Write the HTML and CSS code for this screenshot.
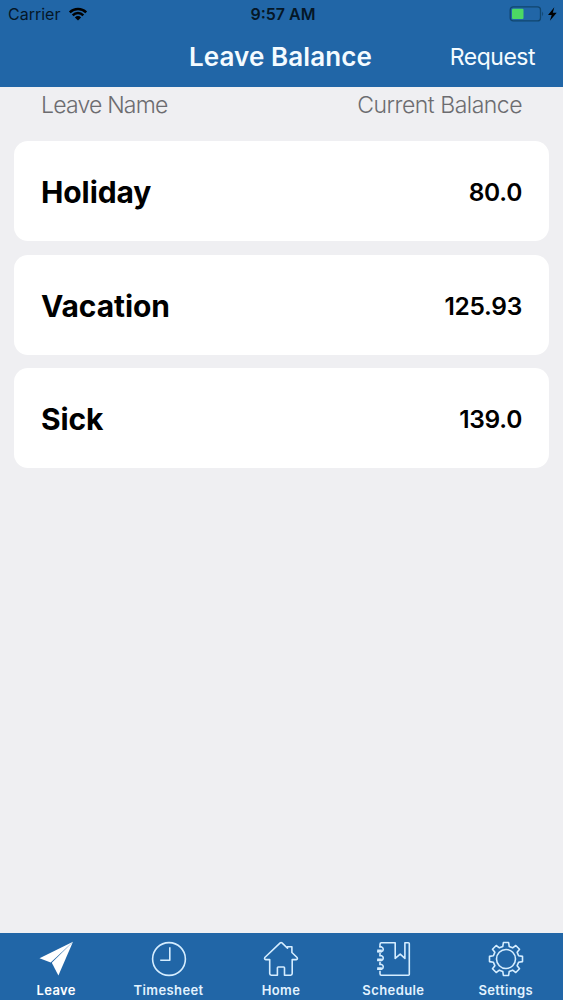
FILE: index.html
```html
<!DOCTYPE html>
<html lang="en">
<head>
  <meta charset="UTF-8" />
  <meta name="viewport" content="width=device-width, initial-scale=1.0" />
  <title>Leave Balance</title>
  <link rel="stylesheet" href="styles.css">
</head>
<body>
  <div class="app">
    <header class="header">
      <div class="status-bar">
        <div class="carrier">
          <span>Carrier</span>
          <svg viewBox="0 0 20 14" width="20" height="14">
            <path d="M1.8 5.3a11.6 11.6 0 0 1 16.4 0M4.7 8.3a7.5 7.5 0 0 1 10.6 0" fill="none" stroke="currentColor" stroke-width="2.5"/>
            <path d="M6.9 10.4a4.4 4.4 0 0 1 6.2 0L10 13.5z" fill="currentColor"/>
          </svg>
        </div>
        <span class="time">9:57 AM</span>
        <div class="battery">
          <svg viewBox="0 0 49 16" width="49" height="16">
            <rect x="1.2" y=".9" width="30.3" height="14" rx="3" fill="none" stroke="#11466f" stroke-width="1.3"/>
            <rect x="3" y="2.8" width="11.5" height="10.3" rx="1" fill="#4cd964"/>
            <path d="M33.2 5.5q2 2.3 0 4.8z" fill="#11466f"/>
            <path d="M45.3 1.2l-6.3 7.8h3.7l-1.8 5.7 6.8-8h-3.9z" fill="#000"/>
          </svg>
        </div>
      </div>
      <div class="nav-bar">
        <h1>Leave Balance</h1>
        <a class="request" href="#">Request</a>
      </div>
    </header>

    <main class="content">
      <div class="list-head">
        <span class="col-name">Leave Name</span>
        <span>Current Balance</span>
      </div>
      <div class="card">
        <span class="leave-name">Holiday</span>
        <span class="balance">80.0</span>
      </div>
      <div class="card">
        <span class="leave-name">Vacation</span>
        <span class="balance">125.93</span>
      </div>
      <div class="card">
        <span class="leave-name">Sick</span>
        <span class="balance">139.0</span>
      </div>
    </main>

    <nav class="tab-bar">
      <a class="tab active" href="#">
        <svg viewBox="0 0 36 36">
          <path d="M35 .8L1.5 17.2l11.2 4.2z" fill="currentColor"/>
          <path d="M35 .8L13.8 21.8l6.6 12.8z" fill="currentColor"/>
        </svg>
        <span>Leave</span>
      </a>
      <a class="tab" href="#">
        <svg class="line" viewBox="0 0 36 36">
          <circle cx="18" cy="18" r="16.4"/>
          <path d="M18.8 6.3v13H9.2"/>
        </svg>
        <span>Timesheet</span>
      </a>
      <a class="tab" href="#">
        <svg class="line" viewBox="0 0 36 36">
          <path d="M17.2 1.9L1.8 16.5q-.8 1.8 1 2.1h3.9v14q0 1.6 1.6 1.6h6.1v-7.4q0-.8.8-.8h5.5q.8 0 .8.8v7.4h6.1q1.6 0 1.6-1.6v-14h4q1.8-.4.9-2.1l-5.2-5V5.7h-4.4v1.6L19 1.9q-.9-.8-1.8 0z"/>
        </svg>
        <span>Home</span>
      </a>
      <a class="tab" href="#">
        <svg class="line" viewBox="0 0 36 36">
          <path d="M5 6V3.2Q5 1.8 6.4 1.8h13.8v15.6l5-4.2 4.7 4.2V1.8h3.4q1 0 1 1v30.4q0 1-1 1H6.4Q5 34.2 5 32.8v-3M5 12v2.4M5 20.7v2.5"/>
          <path d="M2.2 10.6h4.4a2.5 2.5 0 0 0 0-4.7H4.2M2.2 19.4h4.4a2.5 2.5 0 0 0 0-4.7H4.2M2.2 28.2h4.4a2.5 2.5 0 0 0 0-4.7H4.2"/>
          <path d="M2.2 9.9h4.6M2.2 18.7h4.6M2.2 27.5h4.6" stroke-width="2.6"/>
        </svg>
        <span>Schedule</span>
      </a>
      <a class="tab" href="#">
        <svg class="line" viewBox="-18 -18 36 36">
          <circle r="9.5"/>
          <path d="M-2.6-16.5h5.2l.6 3.9 3.45 1.43L9.8-13.5l3.7 3.7-2.33 3.15L12.6-3.2l3.9.6v5.2l-3.9.6-1.43 3.45L13.5 9.8 9.8 13.5l-3.15-2.33L3.2 12.6l-.6 3.9h-5.2l-.6-3.9-3.45-1.43L-9.8 13.5l-3.7-3.7 2.33-3.15L-12.6 3.2l-3.9-.6v-5.2l3.9-.6 1.43-3.45L-13.5-9.8l3.7-3.7 3.15 2.33L-3.2-12.6z"/>
        </svg>
        <span>Settings</span>
      </a>
    </nav>
  </div>
</body>
</html>
```

FILE: styles.css
```css
:root {
  --primary: #2166a7;
  --background: #efeff2;
  --card: #ffffff;
  --muted: #6c6c70;
}

* {
  box-sizing: border-box;
}

body {
  margin: 0;
  font-family: Inter, "Liberation Sans", sans-serif;
  background: var(--background);
  color: #000;
}

a {
  color: inherit;
  text-decoration: none;
}

svg {
  display: block;
}

.app {
  display: flex;
  flex-direction: column;
  height: 100vh;
}

.header {
  height: 87px;
  background: var(--primary);
}

.status-bar {
  display: grid;
  grid-template-columns: 1fr auto 1fr;
  align-items: center;
  height: 28px;
  padding: 0 5px 0 8px;
  font-size: 16px;
  color: #051727;
}

.carrier {
  display: flex;
  align-items: center;
  gap: 8px;
}

.carrier svg {
  color: #000;
}

.time {
  font-weight: 600;
}

.battery {
  justify-self: end;
}

.nav-bar {
  display: grid;
  grid-template-columns: 1fr auto 1fr;
  align-items: center;
  height: 56px;
  padding: 0 28px 0 26px;
  color: #f4fbff;
}

h1 {
  grid-column: 2;
  margin: 0;
  font-size: 26px;
  font-weight: 600;
  letter-spacing: 0.1px;
}

.request {
  justify-self: end;
  padding-top: 2px;
  font-size: 23px;
  letter-spacing: -0.5px;
}

.content {
  flex: 1;
  padding: 0 14px;
}

.list-head {
  display: flex;
  justify-content: space-between;
  height: 54px;
  padding: 4px 27px 0;
  font-size: 23px;
  font-weight: 300;
  line-height: 28px;
  letter-spacing: -0.5px;
  color: var(--muted);
}

.col-name {
  letter-spacing: -0.8px;
}

.card {
  display: flex;
  justify-content: space-between;
  align-items: center;
  height: 100px;
  margin-bottom: 13.6px;
  padding: 2px 27px 0;
  border-radius: 14px;
  background: var(--card);
}

.leave-name {
  font-size: 30px;
  font-weight: 700;
  letter-spacing: -0.1px;
}

.balance {
  font-size: 24.5px;
  font-weight: 600;
  letter-spacing: -0.3px;
}

.tab-bar {
  display: grid;
  grid-template-columns: repeat(5, 1fr);
  height: 67px;
  padding: 8px 1px 0 0;
  background: var(--primary);
}

.tab {
  display: flex;
  flex-direction: column;
  align-items: center;
  gap: 5px;
  font-size: 13px;
  font-weight: 600;
  line-height: 17px;
  letter-spacing: 0.4px;
  color: #e3f3ff;
}

.tab.active {
  color: #fff;
}

.tab svg {
  width: 36px;
  height: 36px;
}

.line {
  fill: none;
  stroke: #d5edff;
  stroke-width: 1.6;
  stroke-linejoin: round;
}
```
